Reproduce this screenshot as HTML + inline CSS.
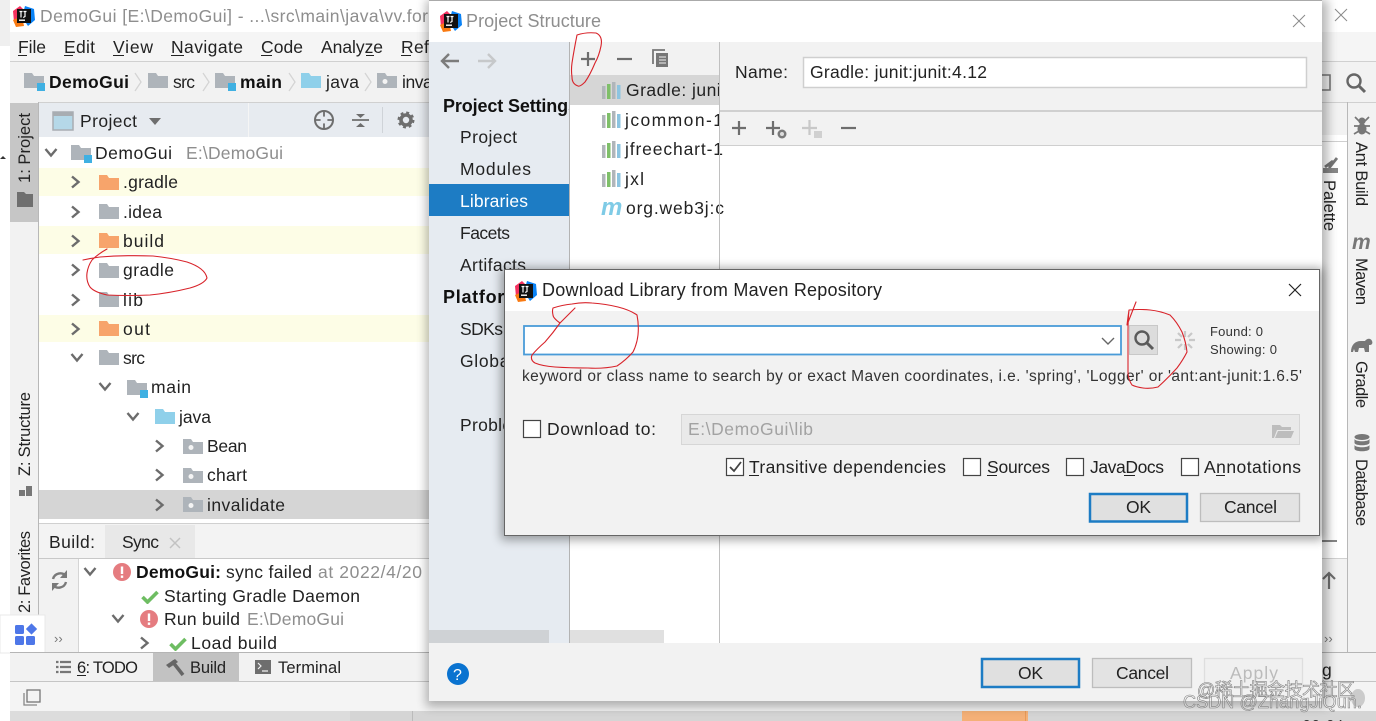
<!DOCTYPE html>
<html><head><meta charset="utf-8"><style>
html,body{margin:0;padding:0;background:#fff;overflow:hidden}
svg{display:block}
text{font-family:"Liberation Sans","Noto Sans CJK SC",sans-serif;font-size:17.5px;fill:#222;white-space:pre}
.g{fill:#8e8e8e}.b{font-weight:bold;fill:#111}.s{font-size:16.5px}
.t{font-size:13px;fill:#333}
</style></head><body>
<svg width="1376" height="721" viewBox="0 0 1376 721" xmlns="http://www.w3.org/2000/svg">
<defs>
<filter id="sh" x="-5%" y="-5%" width="110%" height="110%"><feGaussianBlur stdDeviation="5"/></filter>
<symbol id="fo" viewBox="0 0 20 15" width="20" height="15"><path d="M0 0h8l2 3h10v12H0z" fill="#aeb4ba"/></symbol>
<symbol id="fy" viewBox="0 0 20 15" width="20" height="15"><path d="M0 0h8l2 3h10v12H0z" fill="#f7a46b"/></symbol>
<symbol id="fb" viewBox="0 0 20 15" width="20" height="15"><path d="M0 0h8l2 3h10v12H0z" fill="#8fd0ea"/></symbol>
<symbol id="fp" viewBox="0 0 20 15" width="20" height="15"><path d="M0 0h8l2 3h10v12H0z" fill="#aeb4ba"/><circle cx="8" cy="8.500" r="2.500" fill="#f4f4f4"/></symbol>
<symbol id="fm" viewBox="0 0 22 18" width="22" height="18"><path d="M0 0h8l2 3h10v12H0z" fill="#aeb4ba"/><rect x="13" y="10" width="8" height="8" fill="#3fb0e2"/></symbol>
<symbol id="lg" viewBox="0 0 22 22" width="22" height="22">
<path d="M0 6 7 1 11 5 5 21 1 17z" fill="#f5315f"/><path d="M12 1 21 4 22 15 15 21 9 12z" fill="#0a82f5"/><path d="M0 15 9 11 11 21 3 22z" fill="#f97a12"/>
<rect x="4" y="4" width="14" height="14" fill="#111"/><rect x="6" y="14.500" width="6" height="1.400" fill="#fff"/>
<path d="M6.500 6.500h3M8 6.500v6M10.500 6.500h3M12 6.500v5l-1.800 1" stroke="#fff" stroke-width="1.200" fill="none"/></symbol>
<symbol id="lb" viewBox="0 0 20 17" width="20" height="17"><rect x="0" y="4" width="3.500" height="13" fill="#b0b5ba"/><rect x="5" y="2" width="3.500" height="15" fill="#7fbf6a"/><rect x="10" y="0" width="3.500" height="17" fill="#b0b5ba"/><rect x="15" y="3" width="3.500" height="14" fill="#8cc4e0"/></symbol>
<symbol id="cr" viewBox="0 0 12 14" width="12" height="14"><path d="M2 1.500 8.500 7 2 12.500" fill="none" stroke="#6c6c6c" stroke-width="2.400"/></symbol>
<symbol id="cd" viewBox="0 0 14 12" width="14" height="12"><path d="M1.500 2 7 8.500 12.500 2" fill="none" stroke="#6c6c6c" stroke-width="2.400"/></symbol>
<symbol id="er" viewBox="0 0 18 18" width="18" height="18"><circle cx="9" cy="9" r="9" fill="#e57c80"/><rect x="7.800" y="3.500" width="2.400" height="7.500" fill="#fff"/><rect x="7.800" y="12.500" width="2.400" height="2.400" fill="#fff"/></symbol>
<symbol id="ck" viewBox="0 0 18 14" width="18" height="14"><path d="M1.500 7 6.500 12 16.500 2" fill="none" stroke="#6ebd62" stroke-width="3.600"/></symbol>
<symbol id="pl" viewBox="0 0 16 16" width="16" height="16"><path d="M8 1v14M1 8h14" stroke="#6e6e6e" stroke-width="2.200" fill="none"/></symbol>
</defs>

<!-- desktop + IDE base -->
<rect width="1376" height="721" fill="#fff"/>
<rect x="0" y="0" width="10" height="46" fill="#efefef"/>
<path d="M0 159l3-3 3 3z" fill="#333"/>
<rect x="10" y="32" width="1366" height="30" fill="#f5f5f5"/>
<rect x="10" y="61" width="1366" height="1" fill="#d0d0d0"/>
<rect x="10" y="62" width="1366" height="40" fill="#f2f2f2"/>
<rect x="10" y="102" width="1366" height="1" fill="#d0d0d0"/>
<rect x="10" y="102" width="29" height="550" fill="#f2f2f2"/>
<rect x="38" y="102" width="1" height="550" fill="#b8b8b8"/>
<rect x="10" y="103" width="28" height="119" fill="#c6c6c6"/>
<rect x="39" y="103" width="400" height="34" fill="#e7ebf0"/>
<rect x="248" y="103" width="1" height="34" fill="#f5f5f5"/>
<rect x="382" y="107" width="1" height="26" fill="#cfd3d8"/>

<use href="#lg" x="13" y="5"/>
<text x="40" y="22" class="g" textLength="388">DemoGui [E:\DemoGui] - ...\src\main\java\vv.for</text>
<text x="18" y="53" textLength="28">File</text><rect x="18" y="55" width="9" height="1" fill="#222"/>
<text x="64" y="53" textLength="31">Edit</text><rect x="64" y="55" width="9" height="1" fill="#222"/>
<text x="113" y="53" textLength="40">View</text><rect x="113" y="55" width="11" height="1" fill="#222"/>
<text x="171" y="53" textLength="72">Navigate</text><rect x="171" y="55" width="13" height="1" fill="#222"/>
<text x="261" y="53" textLength="42">Code</text><rect x="261" y="55" width="11" height="1" fill="#222"/>
<text x="321" y="53" textLength="62">Analyze</text><rect x="366" y="55" width="8" height="1" fill="#222"/>
<text x="401" y="53" textLength="38">Refa</text><rect x="401" y="55" width="10" height="1" fill="#222"/>

<use href="#fm" x="24" y="73"/><text x="49" y="88" class="b" textLength="80">DemoGui</text>
<path d="M135 73l6 9-6 9" fill="none" stroke="#d4d4d4" stroke-width="1.300"/>
<use href="#fo" x="148" y="73"/><text x="173" y="88" textLength="22">src</text>
<path d="M203 73l6 9-6 9" fill="none" stroke="#d4d4d4" stroke-width="1.300"/>
<use href="#fm" x="215" y="73"/><text x="240" y="88" class="b" textLength="42">main</text>
<path d="M289 73l6 9-6 9" fill="none" stroke="#d4d4d4" stroke-width="1.300"/>
<use href="#fb" x="301" y="73"/><text x="326" y="88" textLength="33">java</text>
<path d="M365 73l6 9-6 9" fill="none" stroke="#d4d4d4" stroke-width="1.300"/>
<use href="#fp" x="377" y="73"/><text x="402" y="88" textLength="70">invalidate</text>

<!-- project header -->
<rect x="53" y="112" width="20" height="18" fill="#b5d8e8" stroke="#a8adb2" stroke-width="1.500"/><rect x="53" y="112" width="20" height="4" fill="#a8adb2"/>
<text x="80" y="127" textLength="57">Project</text>
<path d="M149 118h12l-6 7z" fill="#6e6e6e"/>
<circle cx="324" cy="120" r="9" fill="none" stroke="#6e6e6e" stroke-width="2"/><path d="M324 111v18M315 120h18" stroke="#6e6e6e" stroke-width="1.800"/><circle cx="324" cy="120" r="3.500" fill="#e7ebf0"/>
<path d="M352 120h17" stroke="#6e6e6e" stroke-width="1.800"/><path d="M356 114h9l-4.500 4zM356 127h9l-4.500-4z" fill="#6e6e6e"/>
<circle cx="406" cy="120" r="5" fill="none" stroke="#6e6e6e" stroke-width="3.600"/><circle cx="406" cy="120" r="7.300" fill="none" stroke="#6e6e6e" stroke-width="2.400" stroke-dasharray="2.900 2.830"/>

<!-- left stripe -->
<text transform="translate(30,183) rotate(-90)" class="s" textLength="70">1: Project</text>
<path d="M17 192h7l2 2h7v13H17z" fill="#6f6f6f"/>
<text transform="translate(30,476) rotate(-90)" class="s" textLength="84">Z: Structure</text>
<path d="M19 490h6v6h-6zM26 486h6v10h-6z" fill="#777"/>
<text transform="translate(30,613) rotate(-90)" class="s" textLength="82">2: Favorites</text>

<!-- tree -->
<rect x="39" y="168" width="400" height="28" fill="#fdfde6"/>
<rect x="39" y="226" width="400" height="28" fill="#fdfde6"/>
<rect x="39" y="315" width="400" height="27" fill="#fdfde6"/>
<rect x="39" y="490" width="400" height="29" fill="#d5d5d5"/>
<use href="#cd" x="44" y="147"/><use href="#fm" x="71" y="145"/><text x="95" y="159" textLength="77">DemoGui</text><text x="186" y="159" class="g" textLength="97">E:\DemoGui</text>
<use href="#cr" x="70" y="175"/><use href="#fy" x="99" y="175"/><text x="123" y="188" textLength="55">.gradle</text>
<use href="#cr" x="70" y="205"/><use href="#fo" x="99" y="204"/><text x="123" y="218" textLength="39">.idea</text>
<use href="#cr" x="70" y="234"/><use href="#fy" x="99" y="233"/><text x="123" y="247" textLength="41">build</text>
<use href="#cr" x="70" y="263"/><use href="#fo" x="99" y="263"/><text x="123" y="276" textLength="51">gradle</text>
<use href="#cr" x="70" y="293"/><use href="#fo" x="99" y="292"/><text x="123" y="306" textLength="20">lib</text>
<use href="#cr" x="70" y="322"/><use href="#fy" x="99" y="321"/><text x="123" y="335" textLength="27">out</text>
<use href="#cd" x="70" y="352"/><use href="#fo" x="99" y="350"/><text x="123" y="364" textLength="22">src</text>
<use href="#cd" x="98" y="381"/><use href="#fm" x="127" y="380"/><text x="151" y="393" textLength="40">main</text>
<use href="#cd" x="126" y="411"/><use href="#fb" x="155" y="409"/><text x="179" y="423" textLength="32">java</text>
<use href="#cr" x="154" y="439"/><use href="#fp" x="183" y="439"/><text x="207" y="452" textLength="40">Bean</text>
<use href="#cr" x="154" y="468"/><use href="#fp" x="183" y="468"/><text x="207" y="481" textLength="40">chart</text>
<use href="#cr" x="154" y="498"/><use href="#fp" x="183" y="497"/><text x="207" y="511" textLength="78">invalidate</text>

<!-- build panel -->
<rect x="39" y="523" width="400" height="1" fill="#d0d0d0"/>
<rect x="39" y="524" width="400" height="34" fill="#f3f3f3"/>
<rect x="105" y="525" width="90" height="33" fill="#e8e8e8"/>
<rect x="39" y="558" width="400" height="1" fill="#c8c8c8"/>
<rect x="39" y="559" width="40" height="93" fill="#f2f2f2"/>
<rect x="78" y="559" width="1" height="93" fill="#d5d5d5"/>
<text x="49" y="548" textLength="46">Build:</text><text x="122" y="548" textLength="37">Sync</text>
<path d="M170 538l10 10M180 538l-10 10" stroke="#c2c2c2" stroke-width="1.500"/>
<path d="M53 579a7.500 7.500 0 0 1 13-3M66 582a7.500 7.500 0 0 1-13 3" fill="none" stroke="#7a7a7a" stroke-width="2.400"/><path d="M67 570v8h-7zM52 591v-8h7z" fill="#7a7a7a"/>
<text x="54" y="643" style="font-size:13px;fill:#777">››</text>
<use href="#cd" x="83" y="566"/><use href="#er" x="113" y="563"/>
<text x="136" y="578" class="b" textLength="85">DemoGui:</text><text x="226" y="578" textLength="86">sync failed</text><text x="318" y="578" class="g" textLength="104">at 2022/4/20</text>
<use href="#ck" x="141" y="590"/><text x="164" y="602" textLength="196">Starting Gradle Daemon</text>
<use href="#cd" x="111" y="613"/><use href="#er" x="140" y="610"/><text x="164" y="625" textLength="76">Run build</text><text x="247" y="625" class="g" textLength="97">E:\DemoGui</text>
<use href="#cr" x="139" y="636"/><use href="#ck" x="169" y="637"/><text x="191" y="649" textLength="86">Load build</text>

<!-- blue overlay icon -->
<rect x="0" y="615" width="45" height="38" fill="#fff" stroke="#e8e8e8"/>
<rect x="15" y="625" width="9" height="9" rx="1.500" fill="#4e77e8"/><rect x="27.500" y="625" width="8" height="8" fill="#4e77e8" transform="rotate(45 31.500 629)"/>
<rect x="15" y="636" width="9" height="9" rx="1.500" fill="#4e77e8"/><rect x="26" y="636" width="9" height="9" rx="1.500" fill="#4e77e8"/>

<!-- bottom bars -->
<rect x="10" y="653" width="1366" height="29" fill="#f2f2f2"/>
<rect x="10" y="652" width="1366" height="1" fill="#b5b5b5"/>
<rect x="10" y="681" width="1366" height="1" fill="#c5c5c5"/>
<rect x="153" y="653" width="86" height="28" fill="#c2c2c2"/>
<path d="M60 662h11M60 667h11M60 672h11" stroke="#777" stroke-width="2.200"/><path d="M56 662h2.500M56 667h2.500M56 672h2.500" stroke="#777" stroke-width="2.200"/>
<text x="77" y="673" class="s" textLength="61">6: TODO</text><rect x="77" y="675" width="9" height="1" fill="#222"/>
<path d="M172 661l11 14" stroke="#666" stroke-width="3.500"/><path d="M166 665l9-6 3 3-9 6z" fill="#666"/>
<text x="190" y="673" class="s" textLength="36">Build</text>
<rect x="255" y="660" width="16" height="14" fill="#6e6e6e"/><path d="M258 663l3 3-3 3M262 671h6" stroke="#f2f2f2" stroke-width="1.200" fill="none"/>
<text x="278" y="673" class="s" textLength="63">Terminal</text>
<rect x="10" y="682" width="1366" height="29" fill="#f4f4f4"/>
<rect x="27" y="690" width="13" height="12" fill="none" stroke="#777" stroke-width="1.300"/><path d="M24 693v12h13" fill="none" stroke="#888" stroke-width="1.300"/>
<rect x="10" y="711" width="1366" height="10" fill="#d5d5d5"/>
<rect x="962" y="711" width="66" height="10" fill="#f4b077"/><rect x="1025" y="711" width="1" height="10" fill="#e89a58"/>
<rect x="10" y="711" width="340" height="10" fill="#dcdcdc"/><rect x="412" y="711" width="1" height="10" fill="#bbb"/>

<!-- right zone -->
<rect x="1322" y="0" width="54" height="32" fill="#fff"/>
<path d="M1335 9l12 12M1347 9l-12 12" stroke="#8a8a8a" stroke-width="1"/>
<path d="M1322 75h8v15h-8" fill="none" stroke="#777" stroke-width="1.600"/>
<circle cx="1354" cy="81" r="6.500" fill="none" stroke="#666" stroke-width="2.400"/><path d="M1359 86l6 6" stroke="#666" stroke-width="3"/>
<rect x="1322" y="103" width="25" height="32" fill="#f2f2f2"/>
<rect x="1322" y="135" width="25" height="6" fill="#fff"/>
<rect x="1322" y="141" width="25" height="1" fill="#cfcfcf"/>
<rect x="1322" y="142" width="25" height="416" fill="#fff"/>
<rect x="1322" y="558" width="25" height="1" fill="#d0d0d0"/>
<rect x="1322" y="559" width="25" height="93" fill="#f2f2f2"/>
<rect x="1347" y="103" width="29" height="549" fill="#f2f2f2"/>
<rect x="1347" y="102" width="1" height="550" fill="#b8b8b8"/>
<path d="M1322 541h15" stroke="#777" stroke-width="1.800"/>
<path d="M1329 589v-16M1323 579l6-6 6 6" fill="none" stroke="#6e6e6e" stroke-width="2.200"/>
<text x="1324" y="643" style="font-size:13px;fill:#777">››</text>
<text x="1322" y="676" textLength="12">g</text>

<!-- right labels -->
<ellipse cx="1362" cy="129" rx="4.500" ry="5.500" fill="#777"/><circle cx="1362" cy="121" r="3.500" fill="#777"/><path d="M1355 117l5 5M1369 117l-5 5M1354 126h16M1354 134l5-3M1370 134l-5-3" stroke="#777" stroke-width="1.700"/>
<text transform="translate(1356,142) rotate(90)" class="s" textLength="64">Ant Build</text>
<path d="M1325 167l8-6M1329 168l8-10" stroke="#777" stroke-width="2.800" fill="none"/><rect x="1323" y="168" width="15" height="5" fill="#888"/>
<text transform="translate(1324,180) rotate(90)" class="s" textLength="51">Palette</text>
<text x="1352" y="249" style="font:italic bold 21px 'Liberation Sans',sans-serif;fill:#777">m</text>
<text transform="translate(1356,258) rotate(90)" class="s" textLength="47">Maven</text>
<path d="M1351 352c0-7 4-11 10-11h4c2-3 6-3 7 0 1 2 0 4-2 4h-1v7h-4l-1-4h-5l-1 4h-3l-1-3-1 3z" fill="#777"/>
<text transform="translate(1356,361) rotate(90)" class="s" textLength="47">Gradle</text>
<ellipse cx="1362" cy="437" rx="7.500" ry="3" fill="#777"/><path d="M1354.500 439c1 3 14 3 15 0v4c-1 3-14 3-15 0zM1354.500 445c1 3 14 3 15 0v4c-1 3-14 3-15 0z" fill="#777"/>
<text transform="translate(1356,459) rotate(90)" class="s" textLength="67">Database</text>

<!-- Project Structure dialog -->
<rect x="426" y="0" width="902" height="707" fill="#000" opacity=".28" filter="url(#sh)"/>
<rect x="429" y="0" width="893" height="701" fill="#fff"/>
<rect x="429" y="0" width="893" height="1" fill="#aaa"/>
<use href="#lg" x="440" y="10"/>
<text x="466" y="27" class="g" textLength="135" style="font-size:18px">Project Structure</text>
<path d="M1293 15l12 12M1305 15l-12 12" stroke="#8a8a8a" stroke-width="1"/>

<rect x="429" y="42" width="141" height="601" fill="#e6ebf1"/>
<path d="M442 61h17M449 54l-7 7 7 7" fill="none" stroke="#7c7c7c" stroke-width="2.400"/>
<path d="M478 61h17M488 54l7 7-7 7" fill="none" stroke="#c6c8ca" stroke-width="2.400"/>
<text x="443" y="112" class="b" textLength="135" style="font-size:18px">Project Settings</text>
<text x="460" y="143" textLength="57">Project</text>
<text x="460" y="175" textLength="71">Modules</text>
<rect x="429" y="184" width="140" height="32" fill="#1d7cc4"/>
<text x="460" y="207" textLength="68" style="fill:#fff">Libraries</text>
<text x="460" y="239" textLength="50">Facets</text>
<text x="460" y="271" textLength="66">Artifacts</text>
<text x="443" y="303" class="b" textLength="78" style="font-size:18px">Platform</text>
<text x="460" y="335" textLength="43">SDKs</text>
<text x="460" y="367" textLength="54">Global</text>
<text x="460" y="431" textLength="76">Problems</text>
<rect x="429" y="630" width="120" height="13" fill="#cfd2d5"/>

<rect x="569" y="42" width="1" height="601" fill="#b4b4b4"/>
<rect x="570" y="42" width="150" height="601" fill="#fff"/>
<rect x="570" y="42" width="150" height="33" fill="#f2f2f2"/>
<rect x="570" y="75" width="150" height="30" fill="#d6d6d6"/>
<use href="#pl" x="580" y="51"/>
<path d="M617 59h15" stroke="#6e6e6e" stroke-width="2.200"/>
<rect x="656" y="53" width="12" height="14" fill="#777"/><path d="M653 64v-14h12" fill="none" stroke="#777" stroke-width="1.800"/><path d="M659 57h7M659 60h7M659 63h7" stroke="#f2f2f2" stroke-width="1"/>
<use href="#lb" x="602" y="82"/><text x="626" y="96" textLength="100">Gradle: junit</text>
<use href="#lb" x="602" y="111"/><text x="625" y="126" textLength="98">jcommon-1</text>
<use href="#lb" x="602" y="141"/><text x="625" y="155" textLength="98">jfreechart-1</text>
<use href="#lb" x="602" y="170"/><text x="625" y="185" textLength="19">jxl</text>
<text x="601" y="215" style="font:italic bold 24px 'Liberation Sans',sans-serif;fill:#7fcbe6">m</text><text x="626" y="214" textLength="98">org.web3j:c</text>
<rect x="570" y="630" width="94" height="13" fill="#e0e0e0"/>

<rect x="719" y="42" width="1" height="601" fill="#c0c0c0"/>
<rect x="720" y="42" width="602" height="68" fill="#f2f2f2"/>
<rect x="720" y="110" width="602" height="2" fill="#d0d0d0"/>
<rect x="720" y="112" width="602" height="33" fill="#f2f2f2"/>
<rect x="720" y="145" width="602" height="1" fill="#cfcfcf"/>
<text x="735" y="78" textLength="53">Name:</text>
<rect x="803.500" y="57.500" width="503" height="30" fill="#fff" stroke="#cfcfcf" stroke-width="1.500"/>
<text x="810" y="78" textLength="177">Gradle: junit:junit:4.12</text>
<use href="#pl" x="731" y="120"/>
<use href="#pl" x="765" y="120"/><circle cx="782" cy="134" r="4.500" fill="#7a7a7a"/><circle cx="782" cy="134" r="2" fill="#ddd"/>
<path d="M802 128h15M809.500 120v15" stroke="#c8c8c8" stroke-width="2.200"/><rect x="814" y="131" width="8" height="7" fill="#d0d0d0"/>
<path d="M841 128h15" stroke="#6e6e6e" stroke-width="2.200"/>

<rect x="429" y="643" width="893" height="58" fill="#f2f2f2"/>
<circle cx="458" cy="674" r="11" fill="#0a73d0"/>
<text x="453" y="680" style="font-size:16px;fill:#fff">?</text>
<rect x="982" y="659" width="97" height="28" fill="#e0e0e0" stroke="#1d7cc4" stroke-width="2.500"/>
<text x="1018" y="679" textLength="25">OK</text>
<rect x="1092.500" y="658.500" width="99" height="29" fill="#e3e3e3" stroke="#bdbdbd" stroke-width="1.300"/>
<text x="1116" y="679" textLength="53">Cancel</text>
<rect x="1204.500" y="658.500" width="98" height="29" fill="#f0f0f0" stroke="#dedede" stroke-width="1.300"/>
<text x="1230" y="679" textLength="48" style="fill:#bbb">Apply</text>

<!-- Maven dialog -->
<rect x="501" y="268" width="822" height="272" fill="#000" opacity=".35" filter="url(#sh)"/>
<rect x="505" y="270" width="814" height="265" fill="#f2f2f2"/>
<rect x="505" y="270" width="814" height="41" fill="#fff"/>
<rect x="504.500" y="269.500" width="815" height="266" fill="none" stroke="#666" stroke-width="1"/>
<use href="#lg" x="515" y="280"/>
<text x="542" y="296" textLength="340" style="font-size:18px">Download Library from Maven Repository</text>
<path d="M1289 284l12 12M1301 284l-12 12" stroke="#222" stroke-width="1.200"/>
<rect x="524" y="326" width="597" height="28.500" fill="#fff" stroke="#4a9bd8" stroke-width="1.800"/>
<path d="M1102 338l6 6 6-6" fill="none" stroke="#666" stroke-width="1.400"/>
<rect x="1129.500" y="325.500" width="28" height="29" fill="#dcdcdc" stroke="#c8c8c8"/>
<circle cx="1142" cy="338" r="6.500" fill="none" stroke="#5a5a5a" stroke-width="2.400"/><path d="M1147 343l6 6" stroke="#5a5a5a" stroke-width="3"/>
<g stroke="#c8c8c8" stroke-width="2.200"><path d="M1185 331v6M1185 344v6M1175 340h6M1189 340h6M1178 333l4 4M1188 344l4 4M1192 333l-4 4M1182 344l-4 4"/></g>
<text x="1210" y="336" class="t" textLength="53">Found: 0</text>
<text x="1210" y="354" class="t" textLength="67">Showing: 0</text>
<text x="522" y="381" textLength="780" style="font-size:15.500px;fill:#333">keyword or class name to search by or exact Maven coordinates, i.e. 'spring', 'Logger' or 'ant:ant-junit:1.6.5'</text>
<rect x="523.500" y="420.500" width="17" height="17" fill="#fff" stroke="#444" stroke-width="1.200"/>
<text x="547" y="435" textLength="109">Download to:</text>
<rect x="681.500" y="414.500" width="618" height="30" fill="#e9e9e9" stroke="#d6d6d6"/>
<text x="688" y="435" textLength="125" style="fill:#a2a2a2">E:\DemoGui\lib</text>
<path d="M1272 438v-13h8l2 2h9v3h-14l-3 8zM1275 438l3-7h16l-3 7z" fill="#bdbdbd"/>
<rect x="726.500" y="458.500" width="17" height="17" fill="#fff" stroke="#444" stroke-width="1.200"/>
<path d="M730 467l4 4 7-9" fill="none" stroke="#444" stroke-width="1.800"/>
<text x="749" y="473" textLength="197">Transitive dependencies</text><rect x="749" y="475" width="10" height="1" fill="#222"/>
<rect x="963.500" y="458.500" width="17" height="17" fill="#fff" stroke="#444" stroke-width="1.200"/>
<text x="987" y="473" textLength="63">Sources</text><rect x="987" y="475" width="10" height="1" fill="#222"/>
<rect x="1066.500" y="458.500" width="17" height="17" fill="#fff" stroke="#444" stroke-width="1.200"/>
<text x="1090" y="473" textLength="74">JavaDocs</text><rect x="1124" y="475" width="11" height="1" fill="#222"/>
<rect x="1181.500" y="458.500" width="17" height="17" fill="#fff" stroke="#444" stroke-width="1.200"/>
<text x="1204" y="473" textLength="97">Annotations</text><rect x="1216" y="475" width="9" height="1" fill="#222"/>
<rect x="1090" y="494" width="97" height="27.500" fill="#e0e0e0" stroke="#1d7cc4" stroke-width="2.500"/>
<text x="1126" y="513" textLength="25">OK</text>
<rect x="1200.500" y="493.500" width="99" height="28" fill="#e3e3e3" stroke="#bdbdbd" stroke-width="1.300"/>
<text x="1224" y="513" textLength="53">Cancel</text>

<!-- scribbles -->
<g fill="none" stroke="#d8232a" stroke-width="1.100" stroke-linejoin="round" stroke-linecap="round">
<path d="M577 35Q586 32 596 33Q603 36 601 46Q599 56 595 63Q590 75 585 82Q580 87 578 86Q572 84 572 77Q571 70 572 63Q574 50 577 35"/>
<path d="M83 260Q92 258 100 257Q125 255 153 256Q172 258 187 262Q205 268 207 278Q204 284 190 288Q170 293 150 295Q128 296 107 295Q94 292 90 287Q86 281 87 273Q88 266 92 260Q98 254 107 249"/>
<path d="M575 308L560 323Q553 318 553 315Q552 311 553 308Q562 305 572 304Q582 302 592 303Q606 304 618 307Q630 310 637 315Q639 325 638 335Q637 344 633 352Q626 360 617 366Q603 369 588 368Q570 368 555 367Q542 366 535 363Q530 360 532 355Q537 349 545 342Q553 333 560 323"/>
<path d="M1136 302L1127 325Q1128 317 1129 310Q1140 309 1150 310Q1160 311 1170 315Q1177 322 1182 332Q1186 342 1187 352Q1183 360 1177 368Q1168 378 1158 387Q1150 389 1143 388Q1136 387 1132 385Q1128 379 1128 372Q1128 350 1128 332Q1128 320 1129 310"/>
</g>

<!-- watermark -->
<ellipse cx="1358" cy="698" rx="7" ry="9" fill="#999" opacity=".45"/>
<text x="1197" y="696" textLength="158" style="font-size:18px;fill:#fff;fill-opacity:.3;stroke:#808080;stroke-width:.6">@稀土掘金技术社区</text>
<text x="1183" y="708" textLength="179" style="font-size:18px;fill:#fff;fill-opacity:.3;stroke:#808080;stroke-width:.6">CSDN @ZhangJiQun.</text>
<text x="1303" y="729" textLength="40" style="font-size:13px;fill:#333">22:24</text>
</svg>
</body></html>
